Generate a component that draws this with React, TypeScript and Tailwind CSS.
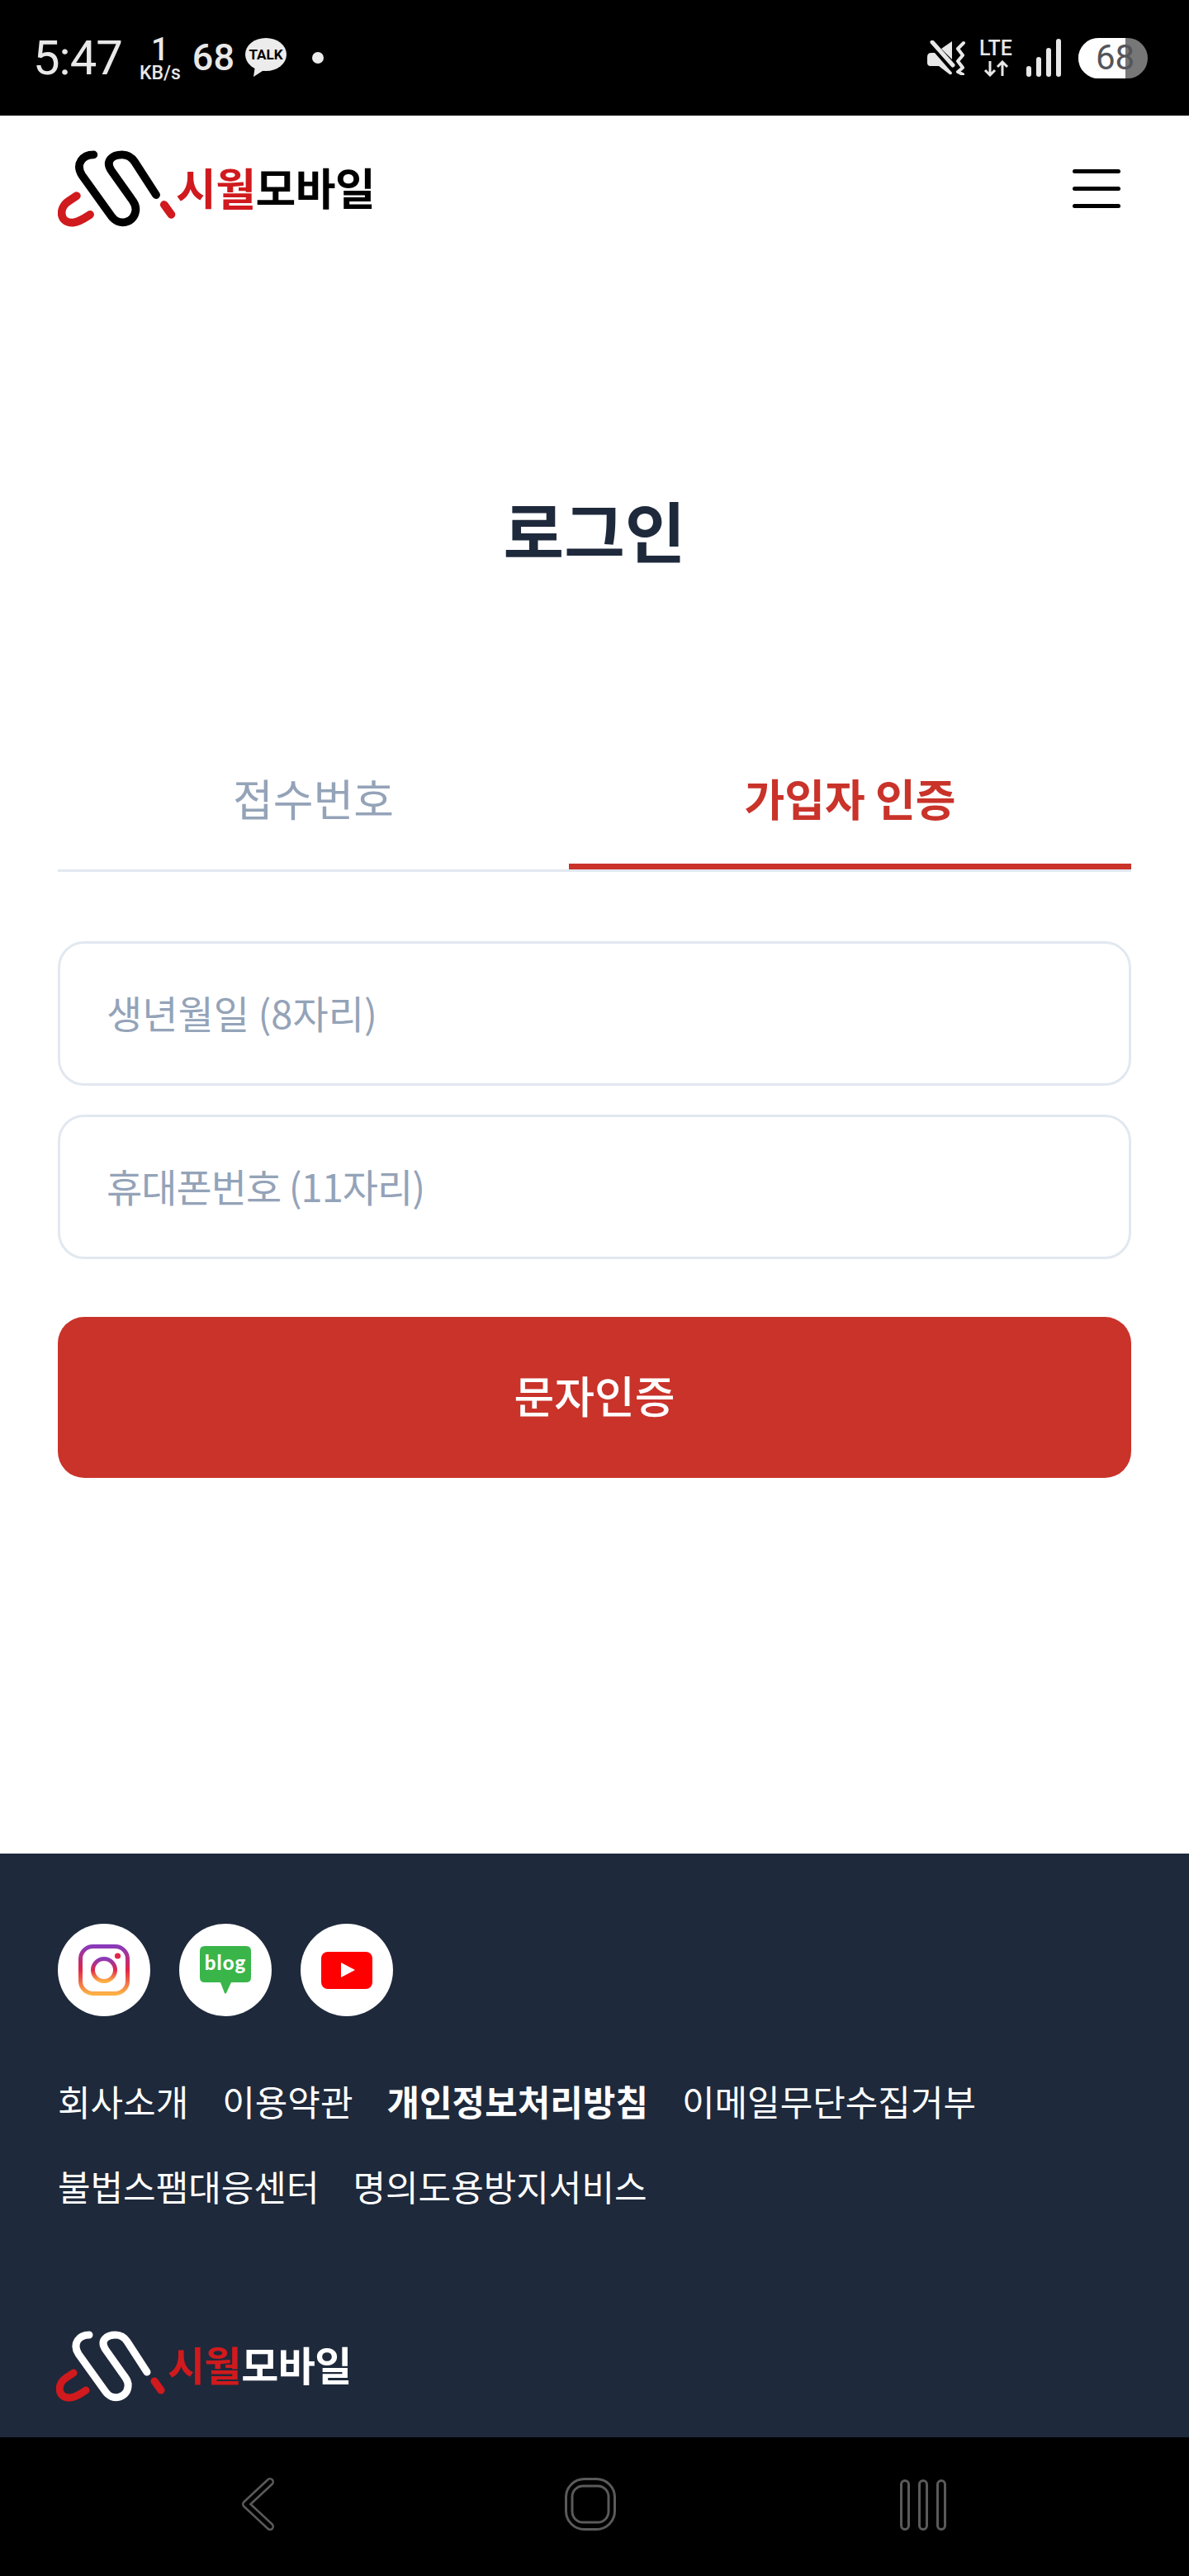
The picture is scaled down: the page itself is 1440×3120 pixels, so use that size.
const KR = "font-['Noto_Sans_CJK_KR','Noto_Sans',sans-serif]";

function Logo({ light, className, textClass }: { light?: boolean; className: string; textClass: string }) {
  return (
    <div className="flex items-center">
      <svg viewBox="28 32 132 86" fill="none" strokeLinecap="round" className={className}>
        <path
          d="M68 37 C56 37 47 47 55 60 L88 106 C96 117 113 114 115 100 C116 94 113 90 110 86 L88 55 C80 43 90 37 100 37 C106 37 110 39 114 45 L138 82"
          stroke={light ? "#ffffff" : "#000000"}
          strokeWidth="9"
        />
        <path d="M49 83 L40 89 C28 97 30 114 45 113 C53 112 58 108 64 104" stroke="#d01a1e" strokeWidth="9" />
        <path d="M147 93 L155 104" stroke="#d01a1e" strokeWidth="9" />
      </svg>
      <div className={`${KR} font-bold whitespace-nowrap ${textClass}`}>
        <span className="text-[#d01a1e]">시월</span>
        <span className={light ? "text-white" : "text-black"}>모바일</span>
      </div>
    </div>
  );
}

function StatusBar() {
  return (
    <div className="flex h-[140px] items-center justify-between bg-black pl-[40px] pr-[50px] font-['Roboto',sans-serif] text-[#e8e8e8]">
      <div className="flex items-center">
        <span className="text-[58px] tracking-[-1px]">5:47</span>
        <div className="ml-[19px] mt-[2px] flex w-[54px] flex-col items-center font-medium">
          <span className="text-[38px] leading-[36px]">1</span>
          <span className="text-[23px] leading-[22px]">KB/s</span>
        </div>
        <span className="ml-[12px] text-[45px] font-medium">68</span>
        <svg viewBox="0 0 50 48" className="ml-[13px] h-[48px] w-[50px]">
          <ellipse cx="25" cy="20" rx="25" ry="20" fill="#ececec" />
          <path d="M12 34 L10 47 L24 38 Z" fill="#ececec" />
          <text x="25" y="26" textAnchor="middle" fontSize="17" fontWeight="700" fill="#000" fontFamily="Roboto">
            TALK
          </text>
        </svg>
        <span className="ml-[31px] h-[14px] w-[14px] rounded-full bg-[#ececec]" />
      </div>
      <div className="flex items-center">
        <svg viewBox="0 0 46 42" className="h-[42px] w-[46px]">
          <path d="M6 2 L31 30" stroke="#e8e8e8" strokeWidth="5" strokeLinecap="round" />
          <path d="M0 20 Q0 15 5 15 L9 15 L30 39 Q30 42 27 41 L14 31 L4 31 Q0 31 0 27 Z" fill="#e8e8e8" />
          <path d="M17 10 L30 1 L30 23 Z" fill="#e8e8e8" />
          <path d="M44 3 L37 10 L43 18 L37 25 L43 33 L37 38 L43 41" fill="none" stroke="#e8e8e8" strokeWidth="4" strokeLinecap="round" strokeLinejoin="round" />
        </svg>
        <div className="ml-[16px] flex w-[42px] flex-col items-center">
          <span className="text-[25px] font-medium leading-[22px]">LTE</span>
          <svg viewBox="0 0 32 20" className="mt-[3px] h-[20px] w-[32px]">
            <path d="M9 1 V18 M3 12 L9 18 L15 12 M24 19 V2 M18 8 L24 2 L30 8" fill="none" stroke="#e8e8e8" strokeWidth="3" />
          </svg>
        </div>
        <svg viewBox="0 0 42 46" className="ml-[16px] h-[46px] w-[42px]">
          <rect x="0" y="33" width="6" height="13" rx="3" fill="#e8e8e8" />
          <rect x="12" y="22" width="6" height="24" rx="3" fill="#e8e8e8" />
          <rect x="24" y="11" width="6" height="35" rx="3" fill="#e8e8e8" />
          <rect x="36" y="0" width="6" height="46" rx="3" fill="#e8e8e8" />
        </svg>
        <div className="relative ml-[21px] flex h-[49px] w-[84px] overflow-hidden rounded-full bg-[#777777]">
          <div className="h-full w-[57px] bg-white" />
          <span className="absolute left-[21px] top-[3px] text-[42px] leading-[42px] text-[#55555a]">68</span>
        </div>
      </div>
    </div>
  );
}

function Header() {
  return (
    <header className="flex h-[176px] items-center justify-between pl-[70px] pr-[83px]">
      <Logo className="h-[93px] w-[143px]" textClass="mt-[-4px] text-[53px] leading-none tracking-[-0.5px]" />
      <div className="flex w-[58px] flex-col gap-[16px]">
        <span className="h-[5px] rounded-full bg-black" />
        <span className="h-[5px] rounded-full bg-black" />
        <span className="h-[5px] rounded-full bg-black" />
      </div>
    </header>
  );
}

function LoginForm() {
  return (
    <main className={`flex flex-1 flex-col px-[70px] ${KR}`}>
      <h1 className="mt-[274px] text-center text-[80px] font-bold leading-[100px] text-[#1e293b]">로그인</h1>
      <div className="mt-[210px] flex border-b-[3px] border-[#e2e8f0]">
        <button className="flex h-[153px] w-[619px] items-center justify-center pb-[20px] text-[53px] text-[#94a3b8]">접수번호</button>
        <button className="flex h-[153px] flex-1 items-center justify-center border-b-[7px] border-[#c9332a] pb-[13px] text-[53px] font-bold text-[#c9332a]">
          가입자 인증
        </button>
      </div>
      <input
        placeholder="생년월일 (8자리)"
        className="mt-[84px] h-[175px] rounded-[32px] border-[3px] border-[#e2e8f0] px-[56px] pb-[4px] text-[47px] outline-none placeholder:text-[#94a3b8]"
      />
      <input
        placeholder="휴대폰번호 (11자리)"
        className="mt-[35px] h-[175px] rounded-[32px] border-[3px] border-[#e2e8f0] px-[56px] pb-[4px] text-[47px] tracking-[-1px] outline-none placeholder:text-[#94a3b8]"
      />
      <button className="mt-[70px] h-[195px] rounded-[32px] bg-[#c9332a] pb-[6px] text-[53px] font-medium text-white">문자인증</button>
    </main>
  );
}

function SocialIcons() {
  return (
    <div className="flex gap-[35px]">
      <div className="flex h-[112px] w-[112px] items-center justify-center rounded-full bg-white">
        <svg viewBox="0 0 62 62" className="h-[62px] w-[62px]">
          <defs>
            <linearGradient id="ig" x1="0" y1="0" x2="0" y2="1">
              <stop offset="0" stopColor="#8a3ab9" />
              <stop offset="0.5" stopColor="#e1264a" />
              <stop offset="1" stopColor="#fcaf45" />
            </linearGradient>
          </defs>
          <rect x="2.5" y="2.5" width="57" height="57" rx="15" fill="none" stroke="url(#ig)" strokeWidth="5" />
          <circle cx="31" cy="31" r="13.5" fill="none" stroke="url(#ig)" strokeWidth="5" />
          <circle cx="47.5" cy="14" r="3.6" fill="#e1264a" />
        </svg>
      </div>
      <div className="flex h-[112px] w-[112px] items-center justify-center rounded-full bg-white">
        <svg viewBox="0 0 62 58" className="h-[58px] w-[62px]">
          <path d="M6 0 H56 Q62 0 62 6 V38 Q62 44 56 44 H38 L32 57 Q31 58 30 57 L25 44 H6 Q0 44 0 38 V6 Q0 0 6 0 Z" fill="#39b54a" />
          <text x="31" y="29" textAnchor="middle" fontSize="24" fontWeight="900" fill="#fff" fontFamily="Lato" letterSpacing="1">
            blog
          </text>
        </svg>
      </div>
      <div className="flex h-[112px] w-[112px] items-center justify-center rounded-full bg-white">
        <svg viewBox="0 0 62 45" className="h-[45px] w-[62px]">
          <rect width="62" height="45" rx="8" fill="#ff0000" />
          <path d="M24 13 L41 22 L24 31 Z" fill="#fff" />
        </svg>
      </div>
    </div>
  );
}

function Footer() {
  const links = ["회사소개", "이용약관", "개인정보처리방침", "이메일무단수집거부", "불법스팸대응센터", "명의도용방지서비스"];
  return (
    <footer className={`h-[707px] bg-[#1e293b] px-[70px] pt-[85px] ${KR}`}>
      <SocialIcons />
      <ul className="mt-[51px] flex w-[1200px] flex-wrap gap-x-[41px] text-[43px] leading-[103px] text-white">
        {links.map((l) => (
          <li key={l} className={l === "개인정보처리방침" ? "font-bold" : ""}>
            {l}
          </li>
        ))}
      </ul>
      <div className="-ml-[2px] mt-[124px]">
        <Logo light className="h-[86px] w-[132px]" textClass="ml-[3px] mt-[-8px] text-[49px] leading-none tracking-[-0.5px]" />
      </div>
    </footer>
  );
}

function NavBar() {
  return (
    <div className="flex h-[168px] items-start bg-black pl-[292px] pt-[49px]">
      <svg viewBox="0 0 40 64" fill="none" strokeLinecap="round" strokeLinejoin="round" className="h-[64px] w-[40px]">
        <path d="M35 5 L6 32 L35 59" stroke="#5a5a5a" strokeWidth="10" />
        <path d="M35 5 L6 32 L35 59" stroke="#000" strokeWidth="5" />
      </svg>
      <svg viewBox="0 0 62 64" fill="none" stroke="#5a5a5a" strokeWidth="3" className="ml-[352px] h-[64px] w-[62px]">
        <rect x="1.5" y="1.5" width="59" height="61" rx="22" />
        <rect x="9" y="10" width="44" height="44" rx="13" />
      </svg>
      <svg viewBox="0 0 56 62" fill="none" stroke="#5a5a5a" strokeWidth="3" className="ml-[344px] mt-[2px] h-[62px] w-[56px]">
        <rect x="1.5" y="1.5" width="9" height="59" rx="4.5" />
        <rect x="23.5" y="1.5" width="9" height="59" rx="4.5" />
        <rect x="45.5" y="1.5" width="9" height="59" rx="4.5" />
      </svg>
    </div>
  );
}

export default function App() {
  return (
    <div className="flex h-[3120px] w-[1440px] flex-col overflow-hidden bg-white">
      <StatusBar />
      <Header />
      <LoginForm />
      <Footer />
      <NavBar />
    </div>
  );
}
